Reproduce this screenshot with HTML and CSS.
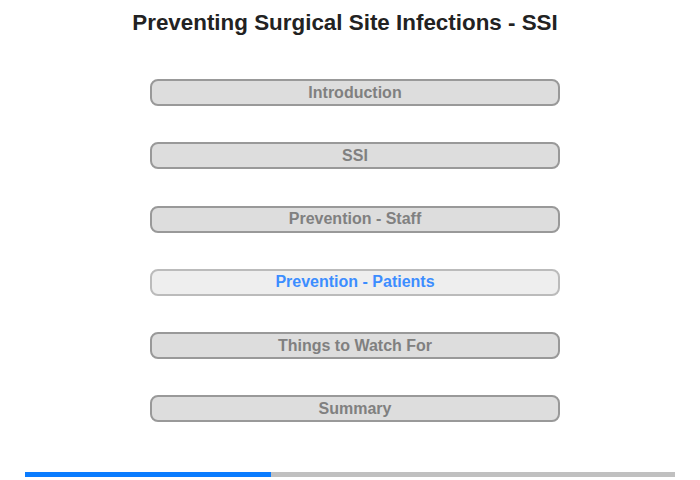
FILE: index.html
```html
<!DOCTYPE html>
<html lang="en">
<head>
    <meta charset="UTF-8">
    <title>Preventing Surgical Site Infections - SSI</title>
    <link rel="stylesheet" href="styles.css">
</head>
<body>
    <h1 class="titulo">Preventing Surgical Site Infections - SSI</h1>

    <div class="menu">
        <button class="item">Introduction</button>
        <button class="item">SSI</button>
        <button class="item">Prevention - Staff</button>
        <button class="item ativo">Prevention - Patients</button>
        <button class="item">Things to Watch For</button>
        <button class="item">Summary</button>
    </div>

    <div class="progresso">
        <div class="barra" style="width: 37.8%"></div>
    </div>
</body>
</html>
```

FILE: styles.css
```css
body {
    font-family: "Liberation Sans", Arial, sans-serif;
    margin: 0;
    width: 700px;
    height: 480px;
    background: #fff;
}
.titulo {
    font-size: 22.4px;
    font-weight: bold;
    color: #222;
    text-align: center;
    margin: 0;
    padding-top: 10px;
    line-height: 26px;
    width: 690px;
}
.menu {
    display: flex;
    flex-direction: column;
    gap: 36.25px;
    margin: 43px 0 0 150px;
    width: 410px;
}
.item {
    height: 27px;
    box-sizing: border-box;
    border: 2px solid #999;
    border-radius: 8px;
    background-color: #ddd;
    color: #808080;
    font-family: inherit;
    font-size: 16px;
    font-weight: bold;
    padding: 0;
    cursor: pointer;
}
.item.ativo {
    border-color: #bbb;
    background-color: #eee;
    color: #3c8dff;
}
.progresso {
    margin: 50px 0 0 25px;
    width: 650px;
    height: 5px;
    background: #c0c0c0;
}
.barra {
    height: 100%;
    background: #0a7cff;
}
```
